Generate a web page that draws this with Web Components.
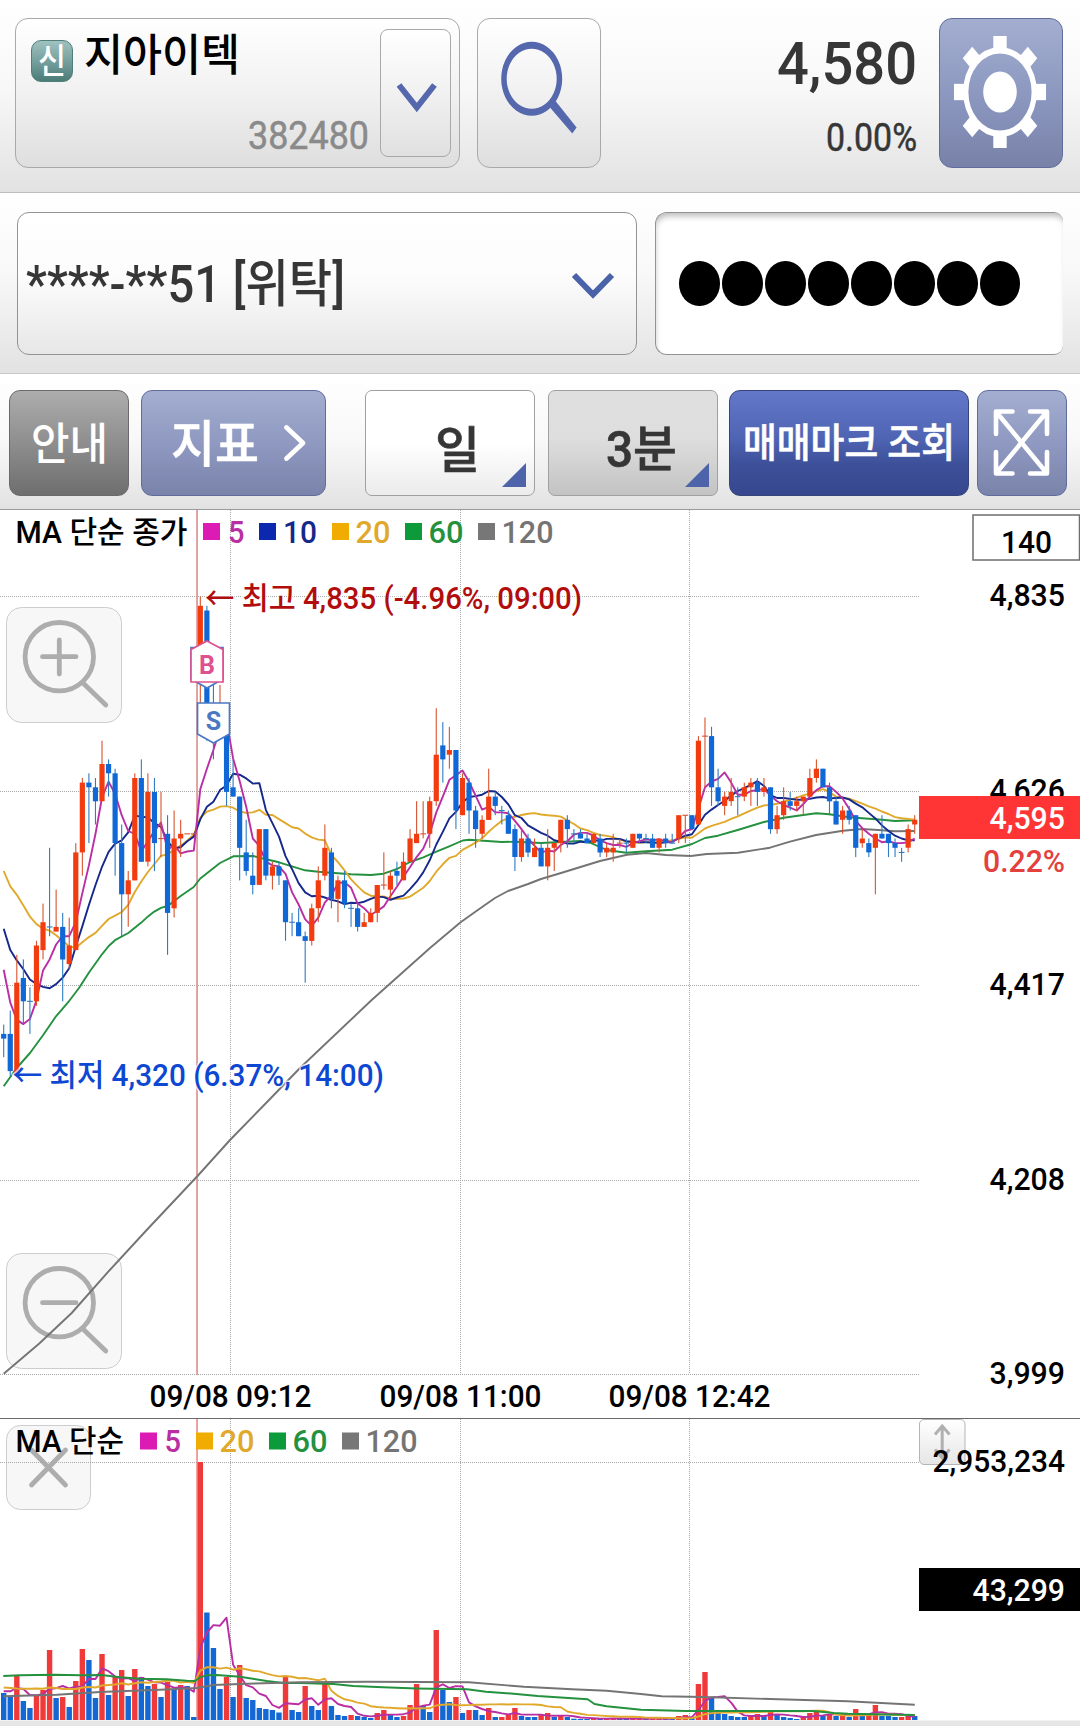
<!DOCTYPE html>
<html lang="ko">
<head>
<meta charset="utf-8">
<title>지아이텍 차트</title>
<style>
body{margin:0;background:#fff;width:1080px;font-family:Roboto,"Noto Sans CJK KR",sans-serif;color:#363636}
</style>
</head>
<body>
<trade-screen></trade-screen>
<script>
const define=(name,html,init)=>customElements.define(name,class extends HTMLElement{
  constructor(){super();this.attachShadow({mode:'open'}).innerHTML=html;}
  connectedCallback(){if(init)init(this,this.shadowRoot);}
});

/* One line of text condensed or widened to a given width */
define('fit-text',`<style>:host{display:block;white-space:nowrap;line-height:1;flex:none}span{display:inline-block;transform-origin:0 0;line-height:inherit;vertical-align:top}</style><span><slot></slot></span>`,
(el,root)=>{
  const s=root.querySelector('span'),w=+el.getAttribute('w');
  el.style.fontSize=el.getAttribute('size')+'px';
  el.style.width='max-content';
  const n=s.getBoundingClientRect().width;
  s.style.transform=`scaleX(${w/n})`;
  el.style.width=w+'px';
});

define('stock-picker',`<style>
:host{display:flex;box-sizing:border-box;width:445px;height:150px;border:1px solid #a9a9a9;border-radius:13px;background:linear-gradient(#fff,#f1f1f1 50%,#dedede)}
.main{width:364px;box-sizing:border-box;display:flex;flex-direction:column;justify-content:space-between;padding:15px 11px 12px 15px}
.row{display:flex;gap:11px}
.badge{width:42px;height:42px;margin-top:6px;box-sizing:border-box;border:1px solid #4f7f7b;border-radius:10px;background:linear-gradient(#a0c2c0,#76a09d 50%,#4c7b78);color:#fff;display:flex;justify-content:center;padding-top:3px;font-weight:500}
.name{color:#000;font-weight:500}
.code{align-self:flex-end;color:#8a8a8a;-webkit-text-stroke:.5px #8a8a8a}
.drop{width:71px;height:128px;margin-top:10px;box-sizing:border-box;border:1px solid #a9a9a9;border-radius:8px;background:linear-gradient(#fff,#f1f1f1 50%,#e0e0e0)}
</style>
<div class="main"><div class="row"><div class="badge"><fit-text w="28" size="34">신</fit-text></div><fit-text class="name" w="156" size="44">지아이텍</fit-text></div>
<fit-text class="code" w="121" size="38.5">382480</fit-text></div>
<div class="drop"><svg width="69" height="126" viewBox="381.5 30 69 126" fill="none" stroke="#5568ad" stroke-width="6"><path d="M399.500 85L417.300 107.500L435 85"/></svg></div>`);

define('search-button',`<style>:host{display:block;box-sizing:border-box;width:124px;height:150px;border:1px solid #a9a9a9;border-radius:13px;background:linear-gradient(#fff,#f1f1f1 50%,#dedede)}svg{display:block}</style>
<svg width="122" height="148" viewBox="478 19 122 148" fill="#5568ad"><path fill-rule="evenodd" d="M531.700 41.700a30.500 37 0 1 0 .01 0zM531.700 48.700a25 30 0 1 1-.01 0z"/><path d="M550 107.500L555.500 101L576.600 127.500L572.300 133.500z"/></svg>`);

define('settings-button',`<style>:host{display:flex;align-items:flex-start;justify-content:center;box-sizing:border-box;width:124px;height:150px;border:1px solid #5f6c9c;border-radius:13px;background:linear-gradient(#a3aed0,#8b96bf 55%,#7882a8);padding-top:16.500px;padding-right:2px}</style>
<svg width="92" height="112" viewBox="-46 -46 92 92" preserveAspectRatio="none" fill="#fff"><g id="t"></g><circle r="34.200" fill="none" stroke="#fff" stroke-width="5.200"/><circle r="16.800"/></svg>`,
(el,r)=>{r.querySelector('#t').innerHTML=[0,45,90,135,180,225,270,315].map(a=>`<rect x="-6.700" y="-46" width="13.400" height="11" transform="rotate(${a})"/>`).join('')});

define('top-bar',`<style>
:host{display:flex;box-sizing:border-box;height:193px;padding:18px 17px 0 15px;border-bottom:1px solid #bdbdbd;background:linear-gradient(#fff,#f8f8f8 45%,#e2e2e2)}
search-button{margin-left:17px}.q{margin-left:auto;display:flex;flex-direction:column;align-items:flex-end;margin-right:22px;padding-top:16px}
.p{font-weight:500}.c{margin-top:25.500px;-webkit-text-stroke:.5px #363636}
</style><stock-picker></stock-picker><search-button></search-button>
<div class="q"><fit-text class="p" w="140" size="59">4,580</fit-text><fit-text class="c" w="91" size="39">0.00%</fit-text></div>
<settings-button></settings-button>`);

define('account-select',`<style>:host{display:flex;align-items:center;justify-content:space-between;box-sizing:border-box;width:620px;height:143px;border:1px solid #939393;border-radius:12px;background:linear-gradient(#fff,#fcfcfc 45%,#e7e7e7);padding:0 21px 0 8px}fit-text{font-weight:500;margin-top:2px}svg{margin-top:2px}</style>
<fit-text w="319" size="51"><slot></slot></fit-text>
<svg width="44" height="30" viewBox="571 270 44 30" fill="none" stroke="#4a62a8" stroke-width="6"><path d="M574 275L593 294.500L612 275"/></svg>`);

define('password-field',`<style>:host{display:flex;align-items:center;gap:2.700px;box-sizing:border-box;width:408px;height:143px;border:1px solid #939393;border-right:0;border-radius:12px 9px 9px 12px;background:#fff;box-shadow:inset 1px 5px 6px -2px #bbb;padding-left:23.300px}i{width:40.300px;height:44.700px;border-radius:50%;background:#000}</style>${'<i></i>'.repeat(8)}`);

define('account-bar',`<style>:host{display:flex;justify-content:space-between;box-sizing:border-box;height:181px;padding:19px 17px 0 17px;border-bottom:1px solid #c8c8c8;background:linear-gradient(#fff,#f8f8f8 45%,#e2e2e2)}</style>
<account-select>****-**51 [위탁]</account-select><password-field></password-field>`);

define('tool-button',`<style>
:host{display:flex;align-items:center;justify-content:center;position:relative;box-sizing:border-box;height:106px;border:1px solid;border-radius:11px;color:#fff;flex:none}
:host([kind=gray]){border-color:#6a6a6a;background:linear-gradient(#adadad,#8e8e8e 50%,#6e6e6e)}
:host([kind=blue]){border-color:#5f6c9c;background:linear-gradient(#a3aed0,#8f99c1 50%,#7a83aa)}
:host([kind=navy]){border-color:#35447d;background:linear-gradient(#6378c8,#4f65b4 45%,#3d5099 70%,#36478e)}
:host([kind=white]){border-color:#a0a0a0;border-radius:7px;background:linear-gradient(#fff,#fff 50%,#ebebeb);color:#363636}
:host([kind=on]){border-color:#a0a0a0;border-radius:7px;background:linear-gradient(#dfdfdf,#dedede 45%,#c3c3c3);color:#363636}
svg{display:none;position:absolute;right:8px;bottom:8px}
:host([kind=white]) svg,:host([kind=on]) svg{display:block}
</style><slot></slot><svg width="24" height="24"><path d="M24 0V24H0z" fill="#4d64aa"/></svg>`);

define('tool-bar',`<style>
:host{display:flex;box-sizing:border-box;height:136px;padding:16px 0 0 9px;border-bottom:1px solid #9a9a9a;background:linear-gradient(#fff,#f8f8f8 50%,#e2e2e2)}
fit-text{font-weight:500}.w{-webkit-text-stroke:.6px #fff}.d{-webkit-text-stroke:.6px #363636}
</style>
<tool-button kind="gray" style="width:120px"><fit-text w="77" size="44" style="margin-top:3px">안내</fit-text></tool-button>
<tool-button kind="blue" style="width:185px;margin-left:12px"><fit-text class="w" w="88" size="50" style="margin:3px 24px 0 11px">지표</fit-text><svg width="24" height="40" viewBox="284 423 24 40" fill="none" stroke="#fff" stroke-width="4.800" stroke-linejoin="round" stroke-linecap="round"><path d="M287.500 427.500L304 443L287.500 458.500"/></svg></tool-button>
<tool-button kind="white" style="width:170px;margin-left:39px"><fit-text class="d" w="45" size="50" style="margin:15px 0 0 15px">일</fit-text></tool-button>
<tool-button kind="on" style="width:170px;margin-left:13px"><fit-text class="d" w="71" size="50" style="margin:14px 0 0 16px">3분</fit-text></tool-button>
<tool-button kind="navy" style="width:240px;margin-left:11px"><fit-text class="w" w="212" size="40" style="margin-top:2px">매매마크 조회</fit-text></tool-button>
<tool-button kind="blue" style="width:90px;margin-left:8px"><svg width="58" height="70" viewBox="993 408 58 70" fill="none" stroke="#fff" stroke-width="4.600" stroke-linecap="round" stroke-linejoin="round"><path d="M996 434V411.500H1012.500M1030 411.500H1047V434M996 452V473.500H1012.500M1030 473.500H1047V452M998 414L1045 471M1045 414L998 471"/></svg></tool-button>`);

/* ---------- chart data ---------- */
/* candles: direction, then high / body top / body bottom / low, in 5-won ticks under 4,835 */
const CANDLES=`b92 94 95 99,b89 94 102 103,r77 83 103 103,b78 82 87 92,b84 87 87 94,r74 75 87 88,r66 70 76 78,b54 71 71 73,r63 71 72 72,b68 71 78 87,r69 75 79 80,r53 55 76 76,r39 40 55 60,b38 40 41 53,b39 41 44 49,r31 36 44 44,b35 36 38 43,b37 38 53 60,b49 53 64 73,r59 61 64 71,r38 39 61 61,b35 39 57 57,r38 42 57 58,b39 42 53 59,r42 52 52 56,b47 51 68 77,r46 52 67 69,r48 51 52 56,r51 51 51 51,r51 51 51 51,r0 2 15 26,b2 3 30 31,b19 27 31 35,r19 28 30 30,b26 28 42 45,b35 41 43 43,b43 43 54 61,b48 55 59 60,b55 60 62 64,r50 50 62 62,b50 50 60 61,r57 58 60 63,b57 58 60 62,b61 61 70 74,b68 70 70 73,b67 70 73 73,b72 73 74 83,r66 67 74 75,r58 61 67 70,r49 54 60 61,b54 55 65 67,r60 61 65 70,b59 61 66 67,b66 67 67 71,b66 67 71 72,r68 70 71 71,r67 68 70 70,r62 62 68 70,r55 62 62 63,r59 60 63 65,b57 59 60 62,r55 57 61 61,r50 52 57 57,r44 51 53 53,r44 51 51 52,r43 44 51 54,r24 34 44 45,b27 32 35 40,r28 33 34 37,b33 33 46 50,r38 39 47 47,b39 40 46 51,b45 46 50 54,r47 48 51 52,r37 43 48 48,b42 43 45 47,b45 46 46 49,b46 47 51 51,b49 50 56 59,r50 52 56 57,b51 52 55 56,r52 54 56 56,b53 54 58 58,r50 54 58 61,r53 53 54 59,r48 48 53 55,b47 48 50 54,b50 51 51 53,b50 51 52 52,b51 52 53 53,r51 51 53 53,b51 52 55 56,r53 54 55 56,r51 54 55 57,r52 53 53 54,b52 53 53 55,r51 51 54 54,b51 51 52 53,b51 52 52 53,b51 52 54 54,r52 52 54 55,b51 52 53 54,b51 53 53 53,r47 47 52 53,r47 47 47 53,b47 47 50 50,r30 31 49 49,r26 30 30 41,b28 30 41 45,b37 41 44 45,r42 43 45 47,r39 42 44 45,b41 43 43 47,r40 41 43 44,r39 40 41 45,b39 40 42 45,r39 41 42 43,b41 41 50 51,r45 47 50 51,r41 44 47 48,b42 44 45 46,r43 44 45 46,r43 43 44 47,r37 39 43 43,r35 37 39 40,b37 37 41 41,b40 41 44 47,b43 44 49 49,r45 46 48 51,b45 46 48 49,b47 47 54 56,r50 52 53 54,b52 53 55 56,r51 51 54 64,b47 51 52 52,b51 51 53 56,b52 53 54 56,b54 55 55 57,r49 50 54 55,r47 48 49 51`
 .split(',').map(s=>({c:s[0],v:s.slice(1).split(' ').map(Number)}));
const VOLUMES=`b27 b23 r44 b19 b12 r25 r30 r70 b22 r23 b13 r39 r71 b60 b22 r66 b25 r44 r50 b24 r51 b43 b34 r36 b23 r38 b31 r35 b34 b3 r258 b107.5 b72 b31 r43 b23 r55 b22 b20 b12 b11 b10 b7.5 r43 b10 b8 r34 b14 b10 r37 b14 b5 b4 r5 b4 b3 b2 r7 r10 b5 b3 r4 r15 r36 b14 b8 r90 b30 b18 r23 b7 r10 b10 b5 r12 b3 r3 r5 r12 b4 b3 b3 r5 r7 b3 r4 b3 b1.3 b1 b1 r2 b1.500 r1.500 r1.500 b1 b1.500 r2 r1 b1 r1.500 r1.500 b1.500 b2 r4 r5 b2 r36 r48 b22 b7 b6 b4 b3 b3 r4 r6 b4 r8 b6 b3 b2 b1 r3 r7 r8 b4 r6 b4 r6 b3 r11 b4 r5 r15 b4 b4 b3 r3 r5 b4`
 .split(' ').map(s=>({c:s[0],v:+s.slice(1)}));
const X=i=>3.7+6.554*i, Y=k=>596.5+4.653*k;
const line=(pts,color)=>`<polyline fill="none" stroke="${color}" stroke-width="1.900" stroke-linejoin="round" points="${pts.map(p=>p[0].toFixed(1)+','+p[1].toFixed(1)).join(' ')}"/>`;
/* moving average; head holds the averages of the first bars, whose history is off screen */
const average=(vals,n,head)=>vals.map((_,i)=>i<n-1?head[i]:vals.slice(i-n+1,i+1).reduce((a,b)=>a+b)/n);
const pairs=s=>s.split(' ').map(p=>p.split(',').map(Number));
const C={m5:'#b92fa3',m10:'#15288c',m20:'#e0a92c',m60:'#24913f',m120:'#747474'};
const text=(x,y,s,o={})=>`<text x="${x}" y="${y}" font-size="${o.size||31}" fill="${o.fill||'#000'}" text-anchor="${o.anchor||'start'}"${o.weight?` style="font-weight:${o.weight}"`:''}${o.w?` textLength="${o.w}" lengthAdjust="spacingAndGlyphs"`:''}${o.halo?' stroke="#fff" stroke-width="3" paint-order="stroke" stroke-opacity=".7"':''}>${s}</text>`;
const dots=d=>`<path d="${d}" fill="none" stroke="#a8a8a8" stroke-width="1" stroke-dasharray="1 1"/>`;
const legend=(y,title,tw,items)=>text(15.5,y,title,{w:tw,size:30.5})+items.map(([sx,tx,s,f,c,w])=>`<rect x="${sx}" y="${y-19.5}" width="17" height="17" fill="${f}"/>`+text(tx,y,s,{fill:c,w,size:30.5})).join('');
const chartStyle=`<style>:host{display:block}svg{display:block}text{font-family:Roboto,"Noto Sans CJK KR",sans-serif;font-weight:400}.m text{font-weight:500}</style>`;
const zoomButton=(y,plus)=>`<g transform="translate(6 ${y})"><rect x=".5" y=".5" width="115" height="115" rx="15" fill="#f7f7f7" stroke="#cdcdcd"/><g fill="none" stroke="#adadad" stroke-width="4.800" stroke-linecap="round"><circle cx="53.300" cy="49.700" r="34.200"/><path d="M77 76L99.800 98M36.500 49.700H70${plus?'M53.300 33V67':''}"/></g></g>`;

define('price-chart',chartStyle+`<svg width="1080" height="908" viewBox="0 510 1080 908"></svg>`,(el,r)=>{
  const close=CANDLES.map(k=>k.c==='r'?k.v[1]:k.v[2]);
  const ma=(n,head)=>average(close,n,head).map((k,i)=>[X(i),Y(k)]);
  const m60=pairs('3.7,1086.200 16.700,1068 30,1053 43,1035.200 56,1016.300 69.300,1000.800 79,988 89,972.500 102,954.300 108.700,946 115,940.200 128.300,933 141.300,922.600 148,916.400 154.300,911.600 161,907.800 167.700,906 180.700,896 193.700,887 200.300,878.500 220,863 233.300,856.300 253.300,856 266,859.300 279,862.300 292,866.300 305,870.300 318.300,871.700 331.300,872.700 351,874.300 370.700,875 383.700,873.700 397,869 410,862 423.300,857.300 436.300,851.700 449.300,846.300 462.700,840.500 469,839.700 501.700,842 515,841.700 541,843 561,842 580.300,841 590,842.700 606.700,850 626.300,852.700 646,851.300 672.300,849.700 692,844 705,838 718,835.700 737.700,830 764,822 783.700,817.700 803.300,815 816.300,813.300 829.300,814.300 849.300,817.300 862.300,818.300 882,819.700 895,821 914.700,820.300');
  const m120=pairs('3.7,1373.700 39.300,1343.500 71.700,1313 108.300,1271.700 146.700,1230 198,1175.500 230,1140 269,1100 300,1068 371.700,1000 393,981 430,948 460.300,922.500 475,912 495,898 508,891 528,884 541,879 561,873 600,861 627,854.700 646,853 666,855 691,856 706.700,854 738,852.700 770,847.700 790,841.700 816,835 843,830.700 862,829 882,830.300 895,831.300 914.700,831');
  const bars=CANDLES.map((k,i)=>{
    const x=X(i),[h,t,b,l]=k.v,f=k.c==='r'?'#f23c10':'#0f68d6',w=k.c==='r'?'#d8542f':'#2f7cc4';
    return (l>h?`<rect x="${(x-.55).toFixed(2)}" y="${Y(h).toFixed(1)}" width="1.100" height="${((l-h)*4.653).toFixed(1)}" fill="${w}"/>`:'')
     +(b>t?`<rect x="${(x-2.600).toFixed(2)}" y="${Y(t).toFixed(1)}" width="5.200" height="${((b-t)*4.653).toFixed(1)}" fill="${f}"/>`
          :`<rect x="${(x-2.900).toFixed(2)}" y="${(Y(t)-.5).toFixed(1)}" width="5.800" height="1.100" fill="${w}"/>`);
  }).join('');
  const grid=[596.500,791.500,985.500,1180.500,1374.500];
  r.querySelector('svg').innerHTML=
   zoomButton(607,true)+zoomButton(1253,false)
  +dots(grid.map(y=>`M0 ${y}H919`).join('')+[230.500,460.500,689.500].map(x=>`M${x} 510V1374`).join(''))
  +'<rect x="196.200" y="510" width="1.700" height="865" fill="#dc9595"/>'
  +line(m120,C.m120)+line(m60,C.m60)
  +line(ma(20,[59,62.3,64.1,66.4,68.8,70.4,71.4,71.8,72.8,74,75.2,75.5,74.3,73.2,72.3,70.8,69.3,68.6,67.8]),C.m20)
  +line(ma(10,[71.4,76,78.2,80.1,82.3,83.3,83.9,84.2,83.3]),C.m10)
  +line(ma(5,[80.2,87.3,91,91.9]),C.m5)
  +bars
  +'<g stroke-width="1.700" fill="#fff"><path stroke="#4a78c4" d="M191 647.500H223V679L207 688L191 679z"/><path stroke="#e0508f" d="M207 641L223 649.500V682H191V649.500z"/><path stroke="#4a78c4" d="M197.500 703H229.500V734L213.500 743L197.500 734z"/></g>'
  +text(207,674,'B',{size:25,weight:700,anchor:'middle',fill:'#e0508f'})+text(213.500,730,'S',{size:25,weight:700,anchor:'middle',fill:'#4a78c4'})
  +'<g class="m">'+text(205,608.5,'← 최고 4,835 (-4.96%, 09:00)',{fill:'#b20d0d',w:377,size:30.5,halo:1})
  +text(12.500,1085.500,'← 최저 4,320 (6.37%, 14:00)',{fill:'#0d47d2',w:371.500,size:30.5,halo:1})
  +legend(542.5,'MA 단순 종가',172,[[203,228,'5','#dc1ab4',C.m5,16.500],[259,283,'10','#0c28ae',C.m10,34],[332,355.500,'20','#f0ac00',C.m20,35],[405,428.500,'60','#0c9a3a',C.m60,35],[478,501.500,'120','#777',C.m120,52]])
  +[4835,4626,4417,4208,3999].map((p,i)=>text(989.500,grid[i]+9.8,p.toLocaleString('en-US'),{w:75.500})).join('')
  +text(230.500,1406.700,'09/08 09:12',{anchor:'middle',w:162})+text(460.500,1406.700,'09/08 11:00',{anchor:'middle',w:162})+text(689.500,1406.700,'09/08 12:42',{anchor:'middle',w:162})
  +'<rect x="973" y="515" width="106.500" height="45" fill="#fff" stroke="#6e6e6e" stroke-width="1.500"/>'+text(1026.500,552.500,'140',{anchor:'middle',size:30.5,w:51})
  +'<rect x="919" y="796" width="161" height="43" fill="#ff3535"/>'+text(989.500,829,'4,595',{w:75.500,fill:'#fff'})
  +text(983,872,'0.22%',{w:82,fill:'#e3403e'})+'</g>';
});

define('volume-chart',chartStyle+`<svg width="1080" height="308" viewBox="0 1418 1080 308"></svg>`,(el,r)=>{
  const vals=VOLUMES.map(v=>v.v),V=v=>1720-v;
  const ma=(n,head)=>average(vals,n,head).map((v,i)=>[X(i),V(v)]);
  const m60=pairs('3.3,1676 20,1675.300 55,1674.700 80,1675.300 101.700,1675 120,1677.300 140,1678.700 166.700,1679.300 186.700,1680.700 195,1681 200,1677.300 206.700,1675.300 216.700,1675 240,1676.700 266.700,1681 283.300,1683 300,1683 333.300,1684 353.300,1686 383.300,1687.300 416.700,1688.500 467,1689.300 486,1691.700 513.600,1693.700 537.700,1696 587.700,1699.300 594.500,1704 606.600,1706.300 641,1709.700 686,1711 813,1711 834,1713 848,1713.700 914.800,1715');
  const m120=pairs('3.3,1696.300 56.700,1694.700 100,1692 160,1689.700 196.700,1688 213.300,1685 246.700,1683.700 300,1682.300 366.700,1681.700 468.900,1682.300 524,1686.700 572,1689.300 606.600,1690.700 641,1694 661.700,1696.300 703,1697 778.800,1699.300 847.700,1701.300 914.800,1704.700');
  r.querySelector('svg').innerHTML=
   '<rect x="6.500" y="1425.500" width="84" height="84" rx="14" fill="#f7f7f7" stroke="#cdcdcd"/><path d="M31.500 1450L65.500 1485M65.500 1450L31.500 1485" stroke="#adadad" stroke-width="4.800" stroke-linecap="round"/>'
  +'<defs><linearGradient id="g" x2="0" y2="1"><stop stop-color="#fff"/><stop offset="1" stop-color="#e6e6e6"/></linearGradient></defs><rect x="919.500" y="1419.500" width="45.500" height="45" rx="4.500" fill="url(#g)" stroke="#b5b5b5"/><path d="M942.200 1426V1458M935 1434.500L942.200 1426L949.500 1434.500M935 1449.500L942.200 1458L949.500 1449.500" fill="none" stroke="#b0b0b0" stroke-width="3"/>'
  +dots('M0 1462.500H919M230.500 1419V1720M460.500 1419V1720M689.500 1419V1720')
  +'<rect x="196.200" y="1419" width="1.700" height="301" fill="#ee9090"/>'
  +VOLUMES.map((v,i)=>`<rect x="${(X(i)-2.700).toFixed(2)}" y="${V(v.v)}" width="5.400" height="${v.v}" fill="${v.c==='r'?'#f03a3a':'#1468d4'}"/>`).join('')
  +line(ma(5,[28.7,28.7,32,31]),C.m5)
  +line(ma(20,[32.5,32,31.5,31.300,31.300,31.5,31.3,32.5,32,31,31,31,32.5,33,32.5,34.5,35,35.5,36.7]),C.m20)
  +line(m60,C.m60)+line(m120,C.m120)
  +'<rect x="0" y="1720.500" width="1080" height="6" fill="#e6e6e6"/><rect x="0" y="1417.500" width="1080" height="1.500" fill="#6a6a6a"/>'
  +'<g class="m">'+legend(1452,'MA 단순',108.500,[[140,164.500,'5','#dc1ab4',C.m5,16.500],[196,219.500,'20','#f0ac00',C.m20,35],[269,292.500,'60','#0c9a3a',C.m60,35],[342,365.500,'120','#777',C.m120,52]])
  +text(932.500,1472,'2,953,234',{w:132.500})
  +'<rect x="919" y="1568" width="161" height="43"/>'+text(972.500,1601,'43,299',{w:92.500,fill:'#fff'})+'</g>';
});

define('trade-screen',`<style>:host{display:flex;flex-direction:column;width:1080px;height:1726px;overflow:hidden;background:#fff}</style>
<top-bar></top-bar><account-bar></account-bar><tool-bar></tool-bar><price-chart></price-chart><volume-chart></volume-chart>`);
</script>
</body>
</html>
